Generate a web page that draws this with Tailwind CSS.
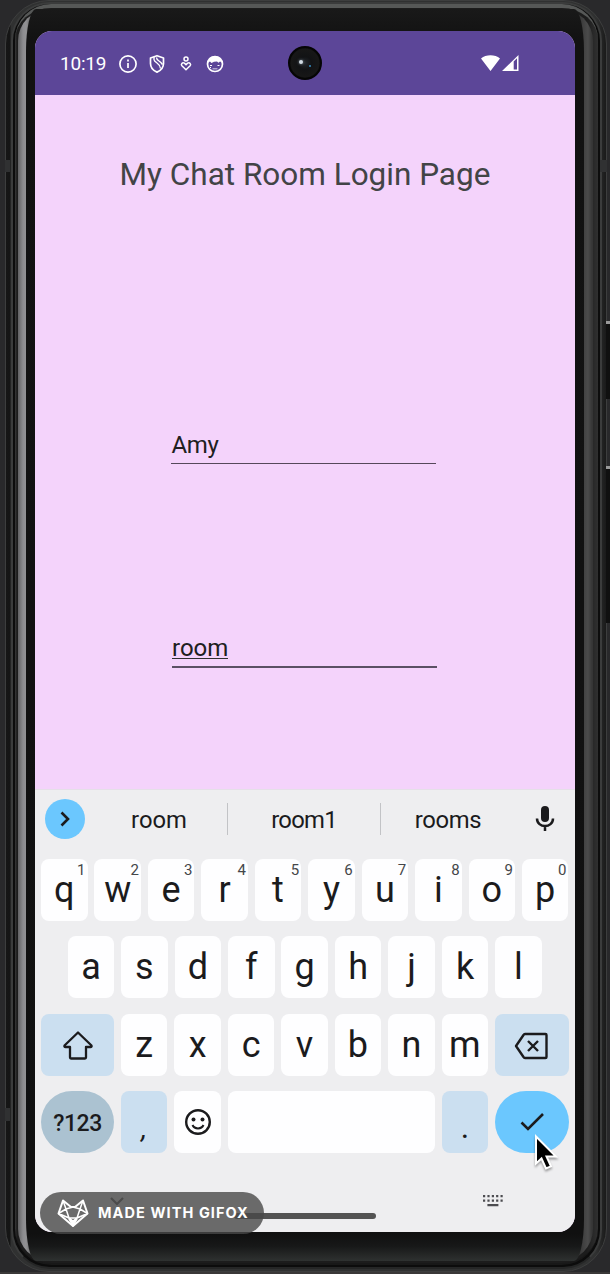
<!DOCTYPE html>
<html lang="en">
<head>
<meta charset="utf-8">
<title>My Chat Room Login Page</title>
<script src="https://cdn.jsdelivr.net/npm/@tailwindcss/browser@4"></script>
</head>
<body class="w-[610px] h-[1274px] overflow-hidden bg-[#29292b] font-['Roboto',sans-serif] text-[#1b1b1d]">
<div class="relative w-[610px] h-[1274px] overflow-hidden pl-[5px] pr-[3px] pb-[2px]">
  <!-- phone casing, from the outer rim inwards -->
  <div class="h-full rounded-[44px] border border-[#3d3e3e] bg-[linear-gradient(90deg,#161616_0,#151515_4px,#303131_5px,#303131_590px,#1a1a1a_600px)] pl-[5px] pr-[4px] pt-[1px] pb-[2px]">
   <div class="h-full rounded-[39px] border-2 border-[#3b3c3c] border-b-[#252626] bg-[#0c0c0c] p-[2px] pt-0">
    <div class="h-full rounded-[36px] bg-[linear-gradient(90deg,#3a3a3a_0,#1c1c1c_2px,#1c1c1c_98%,#303030_100%)] border-t-4 border-t-[#565857] border-b-2 border-b-[#181818] pl-[3px] pr-[5px] pt-px pb-[2px]">
     <div class="h-full rounded-[32px] bg-[linear-gradient(90deg,#626264_0,#8c8c8f_5px,#929294_8px,#333_20px,#333_560px,#424242_566px,#4b4b4b_570px,#353535_574px)] pl-[8px] pr-[9px]">
      <div class="h-full rounded-[10px/42px] bg-[linear-gradient(180deg,#191919_0,#121212_30px,#101010_1225px,#171818_1237px,#303332_1253px)] pl-[9px] pr-[8px] pt-[22px] pb-[28px]">

       <!-- screen -->
       <main class="w-[540px] h-[1201px] rounded-[17px] overflow-hidden bg-[#f4d3fb] flex flex-col">
        <header class="h-[64px] shrink-0 bg-[#5c4698] flex items-center text-white pl-[25px]">
          <span class="w-[46px] text-[19px] leading-6 tracking-[-0.2px] pt-[2px]">10:19</span>
          <svg class="ml-[12px] mt-px" width="20" height="20" viewBox="0 0 20 20" fill="none" stroke="#fff" stroke-width="1.7"><circle cx="10" cy="10" r="8.1"/><path d="M10 9v5M10 5.6v1.8"/></svg>
          <svg class="ml-[9px] mt-px" width="20" height="20" viewBox="0 0 20 20" fill="none" stroke="#fff" stroke-width="1.7" stroke-linejoin="round"><path d="M10 1.7 16.5 4v5.5c0 3.8-2.7 7-6.5 8.6-3.800-1.600-6.500-4.800-6.500-8.600V4z"/><path d="M7 3v2.500q0 1.500 3 3.500 3 2 3.500 5.500M9.500 3.500q0 2 2.500 3.500 2 1.200 3.500 3.500" stroke-width="1.400"/></svg>
          <svg class="ml-[9px] mt-px" width="20" height="20" viewBox="0 0 20 20" fill="none" stroke="#fff" stroke-width="1.500"><circle cx="10" cy="5" r="2"/><path d="M10 15.700 5.900 11.800c-1.400-1.500.5-4 2.500-2.700l1.600 1.500 1.600-1.500c2-1.300 3.900 1.200 2.500 2.700z"/></svg>
          <svg class="ml-[9px] mt-px" width="20" height="20" viewBox="0 0 20 20"><circle cx="10" cy="10" r="7.500" fill="none" stroke="#fff" stroke-width="1.700"/><path fill="#fff" d="M3 8.500C4 4 6 2.500 10 2.500s6 1.500 7 6l-2-1-1.500 1.200L12 7.600l-3 .2L6.500 9 5 7.500zM5 11h2v1H5zM12.500 11h2v1h-2zM7.500 14.500h5v.8h-5zM5 13h1v1H5z"/></svg>
          <!-- front camera -->
          <div class="ml-[63px] size-[34px] rounded-full border-2 border-[#050505] bg-[radial-gradient(circle,#22262b_0,#121315_30%,#171717_65%,#0a0a0a_75%)] flex items-center justify-center gap-[6px]"><i class="size-[4px] mt-[-3px] rounded-full bg-[#d3dce4] shadow-[0_0_3px_#8a98a5]"></i><i class="size-[2px] mt-[5px] rounded-full bg-[#378ec3]"></i></div>
          <svg class="ml-[158px]" width="40" height="18" viewBox="0 0 40 18"><path fill="#fff" d="M1 4.500C6 .2 15 .2 20 4.500L10.500 17zM22 17 38.500 1v16z"/><path fill="#5c4698" d="M33.700 7.500 37 4.200v11.300h-3.300z"/></svg>
        </header>

        <section class="h-[694px] shrink-0 pt-[58px] text-[#202020]">
          <h1 class="text-center text-[31.500px] leading-[44px] text-[#424446] whitespace-nowrap">My Chat Room Login Page</h1>
          <div class="ml-[136px] mt-[230px] w-[265px] h-[37px] border-b border-[#55485a] text-[24px] leading-[37px]"><span class="ml-[0.500px] inline-block tracking-[-0.300px]">Amy</span></div>
          <div class="ml-[137px] mt-[166px] w-[265px] h-[38px] border-b-2 border-[#5b5064] text-[24px] leading-[37px]"><span class="inline-block h-[29px] leading-[37px] border-b border-[#303030]">room</span></div>
        </section>

        <!-- keyboard -->
        <section class="relative h-[443px] shrink-0 bg-[#eeeef0] border-t border-[#e5dfe8]">
          <div class="flex items-center h-[58px] pl-[10px] text-[23.800px]">
            <div class="size-[40px] rounded-full bg-[#6bc7fe] flex items-center justify-center"><svg width="20" height="20" viewBox="0 0 20 20" fill="none" stroke="#1b1b1d" stroke-width="2.600"><path d="m6.500 3.500 6.500 6.500-6.500 6.500"/></svg></div>
            <span class="w-[142px] pl-[6px] pt-[4px] text-center">room</span>
            <i class="w-px h-[32px] bg-[#c2c3c6]"></i>
            <span class="w-[152px] pt-[4px] text-center tracking-[-0.700px]">room1</span>
            <i class="w-px h-[32px] bg-[#c2c3c6]"></i>
            <span class="w-[134px] pt-[4px] text-center tracking-[-0.300px]">rooms</span>
            <svg class="ml-[18px]" width="24" height="30" viewBox="0 0 24 30" fill="none" stroke="#1b1b1d"><path fill="#1b1b1d" stroke="none" d="M8 6a4 4 0 0 1 8 0v8a4 4 0 0 1-8 0z"/><path stroke-width="2.500" d="M4 14.500c0 10 16 10 16 0M12 22v5"/></svg>
          </div>
          <div class="mt-[11px] flex flex-col gap-[15.400px] px-[6px] text-[36px] leading-[62px]">
            <div class="flex gap-[6.950px]" data-keys="qwertyuiop" data-hints="1234567890"></div>
            <div class="flex gap-[6.950px] pl-[26.700px]" data-keys="asdfghjkl"></div>
            <div class="flex gap-[6.950px]" data-keys="zxcvbnm">
              <div class="order-first w-[73px] h-[62px] rounded-[8px] bg-[#cbdff0] flex items-center justify-center"><svg class="mt-[2px]" width="32" height="32" viewBox="0 0 32 32" fill="none" stroke="#1b1b1d" stroke-width="2.300" stroke-linejoin="round"><path d="M16 2.500 29.500 15.500q.5 1.500-1 1.500H24v10.500q0 1-1 1H9q-1 0-1-1V17H3.500q-1.500 0-1-1.500z"/></svg></div>
              <div class="order-last w-[73.500px] h-[62px] rounded-[8px] bg-[#cbdff0] flex items-center justify-center"><svg class="mt-[3px] -ml-[2px]" width="34" height="28" viewBox="0 0 34 28" fill="none" stroke="#1b1b1d" stroke-width="2.400" stroke-linejoin="round"><path d="M11 2h20.500q1 0 1 1v22q0 1-1 1H11q-1 0-1.500-1L2 14 9.500 3q.5-1 1.500-1zM14 9l10 10M24 9 14 19"/></svg></div>
            </div>
            <div class="flex gap-[6.950px]">
              <div class="w-[73px] h-[62px] rounded-[31px] bg-[#abc2d1] text-[23px] leading-[65px] text-center font-medium tracking-[-0.500px]">?123</div>
              <div class="w-[46.500px] h-[62px] rounded-[8px] bg-[#cbdff0] text-center text-[28px] leading-[76px] italic">,</div>
              <div class="w-[46.500px] h-[62px] rounded-[8px] bg-[#fefeff] flex items-center justify-center"><svg width="28" height="28" viewBox="0 0 28 28" fill="none" stroke="#1b1b1d" stroke-width="2.400"><circle cx="14" cy="14" r="11.800"/><path stroke-width="2" d="M8.500 17c2 4.500 9 4.500 11 0"/><circle cx="9.500" cy="11.500" r="2" fill="#1b1b1d" stroke="none"/><circle cx="18.500" cy="11.500" r="2" fill="#1b1b1d" stroke="none"/></svg></div>
              <div class="w-[207px] h-[62px] rounded-[8px] bg-[#fefeff]"></div>
              <div class="w-[46.500px] h-[62px] rounded-[8px] bg-[#cbdff0] text-center text-[32px] leading-[72px]">.</div>
              <div class="w-[73.500px] h-[62px] rounded-[31px] bg-[#6bc7fe] flex items-center justify-center"><svg width="28" height="22" viewBox="0 0 28 22" fill="none" stroke="#1b1b1d" stroke-width="2.600"><path d="m3.500 11.500 6.500 6.500L25 3"/></svg></div>
            </div>
          </div>
          <!-- system navigation -->
          <i class="absolute left-[199px] top-[423px] w-[142px] h-[6px] rounded-full bg-[#535353]"></i>
          <svg class="absolute left-[74px] top-[405px]" width="16" height="12" viewBox="0 0 16 12" fill="none" stroke="#555" stroke-width="2.200"><path d="m2 3 6 6 6-6"/></svg>
          <svg class="absolute left-[447px] top-[405px]" width="22" height="14" viewBox="0 0 22 14" fill="#4c4c50"><path d="M1 0h2.200v2.200H1zM5.400 0h2.200v2.200H5.400zM9.800 0H12v2.200H9.800zM14.100 0h2.200v2.200h-2.200zM18.500 0h2.200v2.200h-2.200zM1 4.500h2.200v2.200H1zM5.400 4.500h2.200v2.200H5.400zM9.800 4.500H12v2.200H9.800zM14.100 4.500h2.200v2.200h-2.200zM18.500 4.500h2.200v2.200h-2.200zM5.400 9h11v2.200h-11z"/></svg>
        </section>
       </main>
      </div>
     </div>
    </div>
   </div>
  </div>

  <!-- side buttons and antenna bands -->
  <i class="absolute left-[5px] top-[160px] w-[5px] h-[12px] bg-[#303132]"></i>
  <i class="absolute left-[5px] top-[1108px] w-[5px] h-[13px] bg-[#303132]"></i>
  <i class="absolute left-[600px] top-[160px] w-[7px] h-[12px] bg-[#303132]"></i>
  <i class="absolute left-[606px] top-[321px] w-[4px] h-[78px] bg-[#101010] border-t-3 border-t-[#999]"></i>
  <i class="absolute left-[606px] top-[466px] w-[4px] h-[157px] bg-[#101010] border-t-3 border-t-[#999]"></i>
  <i class="absolute left-0 bottom-0 w-[610px] h-[2px] bg-[#3a3838]"></i>

  <!-- recorder badge -->
  <div class="absolute left-[40px] top-[1192px] w-[224px] h-[42px] rounded-full bg-[#484848]/80 flex items-center pl-[17px] text-white">
    <svg class="shrink-0" width="32" height="30" viewBox="0 0 32 30" fill="none" stroke="#fff" stroke-width="1.500" stroke-linejoin="round"><path stroke-width="2" d="M6 2.500 14 9h4l8-6.500 4.500 13L16 28 1.500 15.500z"/><path d="M6 2.500 9 11l7-2 7 2 3-8.500M1.500 15.500 9 11l3 9 4 3.500 4-3.500 3-9 7.500 4.500M9 11l7-2M12 20h8M1.500 15.500 12 20M30.500 15.500 20 20"/><path fill="#fff" d="m12 21 4 2 4-2-4 7z"/></svg>
    <span class="ml-[9px] whitespace-nowrap font-['Inter',sans-serif] text-[14.500px] leading-5 font-bold tracking-[1.080px]">MADE WITH GIFOX</span>
  </div>

  <!-- pointer -->
  <svg class="absolute left-[533px] top-[1132px] drop-shadow-[0_2px_1px_rgba(0,0,0,0.350)]" width="26" height="40" viewBox="0 0 26 40"><path d="M3 4.500v27l5.500-5 4.500 10 5-2.200-4.500-9.800H23z" fill="#000" stroke="#fff" stroke-width="2"/></svg>
</div>
<script>
  document.querySelectorAll('[data-keys]').forEach(function (row) {
    var hints = row.dataset.hints || '';
    Array.from(row.dataset.keys).forEach(function (letter, i) {
      var key = document.createElement('div');
      key.className = 'relative w-[46.500px] h-[62px] rounded-[8px] bg-[#fefeff] text-center';
      key.textContent = letter;
      if (hints[i]) {
        var hint = document.createElement('span');
        hint.className = 'absolute right-[2px] top-[3px] text-[15px] leading-[17px] text-[#444649]';
        hint.textContent = hints[i];
        key.appendChild(hint);
      }
      row.appendChild(key);
    });
  });
</script>
</body>
</html>
